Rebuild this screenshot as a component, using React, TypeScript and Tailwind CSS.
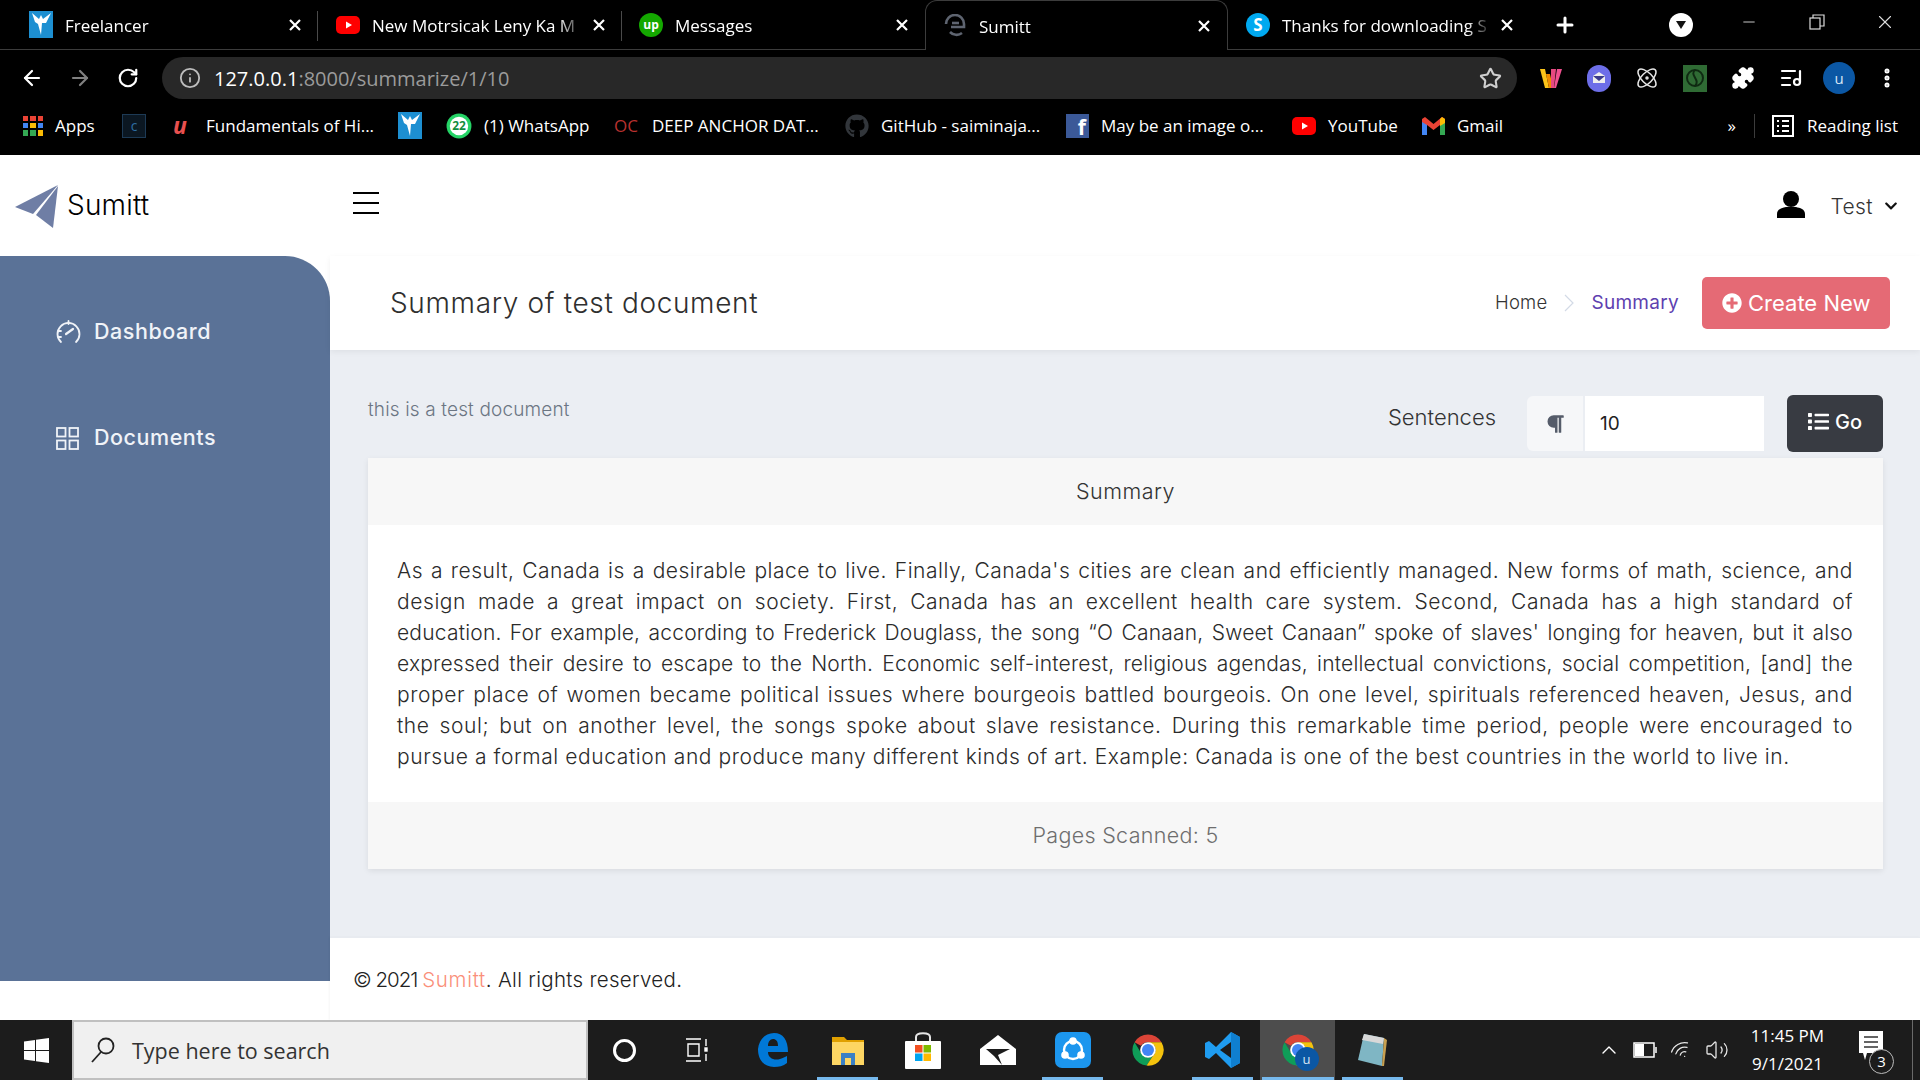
import React from "react";
import { FaParagraph, FaPlusCircle, FaList, FaChevronDown, FaGithub } from "react-icons/fa";
import { ArrowLeft, ArrowRight, RotateCw, Info, Star, Plus, X, Minus, Puzzle, ListMusic, MoreVertical, ChevronUp, Atom, Volume2, Wifi } from "lucide-react";

const FreelancerIcon = () => (
  <svg width="24" height="27" viewBox="0 0 24 27"><rect width="24" height="27" fill="#1d8fd1" /><path d="M3 2 L10 8 L12 4 L14 8 L22 2 L17 12 L13 12 L12 24 L9 13 L6 11Z" fill="#fff" /></svg>
);
const YtIcon = () => (
  <svg width="24" height="18" viewBox="0 0 24 18"><rect width="24" height="18" rx="5" fill="#f00" /><path d="M10 5.5 L16 9 L10 12.5Z" fill="#fff" /></svg>
);
const UpIcon = () => (
  <div className="w-6 h-6 rounded-full bg-[#14a800] flex items-center justify-center text-white text-[12px] font-bold leading-none">up</div>
);
const SumittFav = () => (
  <svg width="24" height="24" viewBox="0 0 24 24" fill="none" stroke="#5e6470" strokeWidth="2.6"><path d="M3 10 A9 9 0 0 1 21 10 L 21 13 L 8 13" /><path d="M7 18 A9 9 0 0 0 19 19" /><path d="M9 9 H16" /></svg>
);
const SkypeIcon = () => (
  <div className="w-6 h-6 rounded-full bg-[#00a9f0] flex items-center justify-center text-white text-[17px] font-bold leading-none">S</div>
);
const Close = () => <svg width="14" height="14" viewBox="0 0 14 14" stroke="#fff" strokeWidth="2.2"><path d="M2 2 L12 12 M12 2 L2 12" /></svg>;

function Tab({ w, pl, icon, title, active, sep }: { w: number; pl: number; icon: React.ReactNode; title: string; active?: boolean; sep?: boolean }) {
  return (
    <div style={{ width: w, paddingLeft: pl }} className={`relative h-[50px] flex items-center pr-[16px] ${active ? "border border-b-0 border-[#3c3c3c] rounded-t-[12px] bg-black" : "border-b border-[#3c3c3c]"}`}>
      <div className="w-6 shrink-0 flex justify-center">{icon}</div>
      <div className="flex-1 ml-3 mr-[8px] mt-[2px] overflow-hidden whitespace-nowrap text-[17px] text-white [mask-image:linear-gradient(to_right,#000_88%,transparent)]">{title}</div>
      <Close />
      {sep && <div className="absolute right-0 top-[11px] h-[30px] w-px bg-[#4a4a4a]" />}
    </div>
  );
}

function TabStrip() {
  return (
    <div className="flex h-[50px] bg-black">
      <Tab w={318} pl={29} icon={<FreelancerIcon />} title="Freelancer" sep />
      <Tab w={304} pl={18} icon={<YtIcon />} title="New Motrsicak Leny Ka M" sep />
      <Tab w={303} pl={17} icon={<UpIcon />} title="Messages" />
      <Tab w={303} pl={17} icon={<SumittFav />} title="Sumitt" active />
      <Tab w={302} pl={18} icon={<SkypeIcon />} title="Thanks for downloading S" />
      <div className="flex-1 flex h-[50px] border-b border-[#3c3c3c]">
        <div className="w-[70px] flex items-center justify-center"><Plus size={24} color="#fff" strokeWidth={3} /></div>
        <div className="ml-auto flex pr-px">
          <div className="w-[68px] flex items-center justify-center">
            <div className="w-[24px] h-[24px] rounded-full bg-white flex items-center justify-center">
              <svg width="12" height="10" viewBox="0 0 12 10"><path d="M1 1 H11 L6 9Z" fill="#111" /></svg>
            </div>
          </div>
          <div className="w-[68px] flex items-center justify-center pb-[6px]"><Minus size={18} color="#ddd" strokeWidth={1.2} /></div>
          <div className="w-[68px] flex items-center justify-center pb-[6px]">
            <svg width="16" height="16" viewBox="0 0 16 16" fill="none" stroke="#ddd" strokeWidth="1.2"><rect x="1" y="4" width="10" height="11" /><path d="M4 4 V1 H15 V12 H11" /></svg>
          </div>
          <div className="w-[68px] flex items-center justify-center pb-[6px]"><X size={22} color="#ddd" strokeWidth={1.2} /></div>
        </div>
      </div>
    </div>
  );
}

function ToolBtn({ children }: { children: React.ReactNode }) {
  return <div className="w-[48px] flex items-center justify-center shrink-0">{children}</div>;
}

function Toolbar() {
  return (
    <div className="flex h-[56px] bg-black items-center pl-[8px] pr-[9px]">
      <ToolBtn><ArrowLeft size={24} color="#fff" strokeWidth={2.2} /></ToolBtn>
      <ToolBtn><ArrowRight size={24} color="#808080" strokeWidth={2.2} /></ToolBtn>
      <ToolBtn><RotateCw size={22} color="#fff" strokeWidth={2.4} /></ToolBtn>
      <div className="ml-[10px] mr-[10px] flex-1 h-[42px] rounded-full bg-[#282828] flex items-center pl-[17px] pr-[15px]">
        <Info size={22} color="#bdbdbd" strokeWidth={2} />
        <div className="ml-[13px] mt-[2px] text-[20px] text-[#9b9b9b] whitespace-nowrap"><span className="text-white">127.0.0.1</span>:8000/summarize/1/10</div>
        <div className="ml-auto"><Star size={23} color="#cfcfcf" strokeWidth={2.2} /></div>
      </div>
      <ToolBtn>
        <svg width="24" height="24" viewBox="0 0 24 24"><path d="M1 3 H6 L10 22 H6Z" fill="#fcc419" /><path d="M7 8 L11 8 L14 22 H10Z" fill="#f08c00" /><path d="M12 3 L17 3 L15 22 H12Z" fill="#e64980" /><path d="M18 3 H23 L17 22 H15Z" fill="#f0508f" /></svg>
      </ToolBtn>
      <ToolBtn>
        <div className="w-6 h-[27px] rounded-full bg-[#6d6ee8] flex items-center justify-center">
          <svg width="14" height="14" viewBox="0 0 14 14"><path d="M1 5 L7 1 L13 5 V12 H1Z" fill="#eee" /><path d="M1 5 L7 10 L13 5Z" fill="#3a3a8c" /></svg>
        </div>
      </ToolBtn>
      <ToolBtn><Atom size={24} color="#e6e6e6" strokeWidth={1.5} /></ToolBtn>
      <ToolBtn>
        <div className="w-6 h-[27px] bg-[#2f6b34] flex items-center justify-center">
          <svg width="20" height="22" viewBox="0 0 20 22" fill="none" stroke="#0f2a12" strokeWidth="2"><circle cx="10" cy="11" r="8" /><path d="M10 3 C4 8 16 13 10 19" /></svg>
        </div>
      </ToolBtn>
      <ToolBtn><Puzzle size={24} fill="#fff" color="#fff" strokeWidth={1.5} /></ToolBtn>
      <ToolBtn><ListMusic size={24} color="#fff" strokeWidth={2.2} /></ToolBtn>
      <ToolBtn><div className="w-8 h-8 rounded-full bg-[#0b57a4] flex items-center justify-center text-[#d8e6f5] text-[15px] leading-none">u</div></ToolBtn>
      <ToolBtn><MoreVertical size={24} color="#fff" strokeWidth={3} /></ToolBtn>
    </div>
  );
}

function Bookmark({ w, icon, label }: { w: number; icon: React.ReactNode; label?: string }) {
  return (
    <div style={{ width: w }} className="flex items-center shrink-0">
      {icon}
      {label && <span className="ml-[12px] text-[17px] text-white whitespace-nowrap">{label}</span>}
    </div>
  );
}

const AppsIcon = () => (
  <div className="grid grid-cols-3 gap-[2px] w-[20px] h-[20px]">
    {["#ea4335", "#ea4335", "#ea4335", "#4285f4", "#fbbc05", "#4285f4", "#34a853", "#34a853", "#fbbc05"].map((c, i) => (
      <div key={i} style={{ background: c }} />
    ))}
  </div>
);

const GmailIcon = () => (
  <svg width="23" height="18" viewBox="0 0 23 18"><path d="M0 3 V18 H5 V7Z" fill="#4285f4" /><path d="M23 3 V18 H18 V7Z" fill="#34a853" /><path d="M0 2 L3 0 L11.5 7 L20 0 L23 2 V5 L18 8 L11.5 13 L5 8 L0 5Z" fill="#ea4335" /><path d="M18 2 L20 0 L23 2 V6 L18 9Z" fill="#fbbc05" /></svg>
);

function Bookmarks() {
  return (
    <div className="flex h-[49px] pb-[10px] bg-black items-center pl-[23px]">
      <Bookmark w={99} icon={<AppsIcon />} label="Apps" />
      <Bookmark w={51} icon={<div className="w-[24px] h-[24px] border border-[#1d3a55] bg-[#0b1722] text-[#2e6ea3] text-[14px] flex items-center justify-center leading-none">c</div>} />
      <Bookmark w={225} icon={<div className="w-[21px] text-[#e8504f] text-[23px] italic font-bold leading-none">u</div>} label="Fundamentals of Hi..." />
      <Bookmark w={48} icon={<FreelancerIcon />} />
      <Bookmark w={168} icon={
        <svg width="26" height="26" viewBox="0 0 24 24"><circle cx="12" cy="12" r="11.5" fill="#25d366" /><circle cx="12" cy="12" r="8.5" fill="#fff" /><text x="12" y="16" fontSize="11" fontWeight="700" textAnchor="middle" fill="#128c3e">22</text></svg>
      } label="(1) WhatsApp" />
      <Bookmark w={231} icon={<div className="w-[26px] text-[#b8312f] text-[17px] leading-none">OC</div>} label="DEEP ANCHOR DAT..." />
      <Bookmark w={221} icon={<FaGithub size={24} color="#32363b" />} label="GitHub - saiminaja..." />
      <Bookmark w={226} icon={<div className="w-[23px] h-[24px] bg-[#3b5998] text-white text-[21px] font-bold flex items-end justify-end pr-[3px] leading-none">f</div>} label="May be an image o..." />
      <Bookmark w={130} icon={<YtIcon />} label="YouTube" />
      <Bookmark w={100} icon={<GmailIcon />} label="Gmail" />
      <div className="ml-auto flex items-center pr-[22px]">
        <span className="text-white text-[17px] leading-none mr-[18px]">»</span>
        <div className="w-px h-[24px] bg-[#3c3c3c] mr-[17px]" />
        <svg width="22" height="22" viewBox="0 0 22 22" fill="none" stroke="#fff" strokeWidth="2"><rect x="1" y="1" width="20" height="20" /><path d="M5 6 H7 M10 6 H17 M5 11 H7 M10 11 H17 M5 16 H7 M10 16 H17" /></svg>
        <span className="ml-[13px] text-[17px] text-white whitespace-nowrap">Reading list</span>
      </div>
    </div>
  );
}

const Logo = () => (
  <svg width="44" height="44" viewBox="0 0 44 44">
    <path d="M0 23 L43 1 L18 30Z" fill="#6f7ea5" />
    <path d="M21 31 L43 2 L38 44Z" fill="#6f7ea5" />
  </svg>
);

function Navbar() {
  return (
    <div className="h-[101px] bg-white flex items-center pl-[15px] pr-[22px] shrink-0">
      <Logo />
      <span className="ml-[8px] text-[28px] font-light text-black leading-none tracking-[0.2px] mt-[-2px]">Sumitt</span>
      <div className="ml-[204px] mb-[5px] w-[26px] flex flex-col gap-[8px]">
        <div className="h-[2px] bg-black" />
        <div className="h-[2px] bg-black" />
        <div className="h-[2px] bg-black" />
      </div>
      <div className="ml-auto flex items-center">
        <svg className="mb-[2px]" width="28" height="27" viewBox="0 0 28 27"><circle cx="14" cy="8" r="8" /><path d="M0 27 V23 C0 18 5 17 9 16 H19 C23 17 28 18 28 23 V27Z" /></svg>
        <span className="ml-[25px] mt-[2px] text-[21px] font-light text-[#333] leading-none tracking-[0.4px]">Test</span>
        <FaChevronDown size={14} color="#111" className="ml-[11px]" />
      </div>
    </div>
  );
}

function Sidebar() {
  return (
    <div className="w-[330px] shrink-0 bg-white">
      <div className="h-[725px] bg-[#5a7297] rounded-tr-[45px] pl-[56px] pt-[64px] text-[#f0f3f8]">
        <div className="flex items-center h-[24px]">
          <svg width="25" height="24" viewBox="0 0 25 24" fill="none" stroke="#f0f3f8" strokeWidth="1.8" strokeLinecap="round">
            <path d="M5 22 A11 11 0 1 1 20 22" />
            <path d="M10 14 L17 9" strokeWidth="2.2" />
            <path d="M5 11 H2.5 M5 17 H2.5 M12.5 1 V4" />
          </svg>
          <span className="ml-[13px] text-[21.5px] font-medium leading-none tracking-[0.55px]">Dashboard</span>
        </div>
        <div className="flex items-center h-[24px] mt-[82px]">
          <svg width="23" height="23" viewBox="0 0 23 23" fill="none" stroke="#f0f3f8" strokeWidth="1.8"><rect x="1" y="1" width="8.5" height="8.5" /><rect x="13.5" y="1" width="8.5" height="8.5" /><rect x="1" y="13.5" width="8.5" height="8.5" /><rect x="13.5" y="13.5" width="8.5" height="8.5" /></svg>
          <span className="ml-[15px] text-[21.5px] font-medium leading-none tracking-[0.55px]">Documents</span>
        </div>
      </div>
    </div>
  );
}

const LINES = [
  { t: "As a result, Canada is a desirable place to live. Finally, Canada's cities are clean and efficiently managed. New forms of math, science, and", c: "tracking-[0.5px]" },
  { t: "design made a great impact on society. First, Canada has an excellent health care system. Second, Canada has a high standard of", c: "tracking-[0.58px]" },
  { t: "education. For example, according to Frederick Douglass, the song “O Canaan, Sweet Canaan” spoke of slaves' longing for heaven, but it also", c: "tracking-[0.2px]" },
  { t: "expressed their desire to escape to the North. Economic self-interest, religious agendas, intellectual convictions, social competition, [and] the", c: "tracking-[0.2px]" },
  { t: "proper place of women became political issues where bourgeois battled bourgeois. On one level, spirituals referenced heaven, Jesus, and", c: "tracking-[0.58px]" },
  { t: "the soul; but on another level, the songs spoke about slave resistance. During this remarkable time period, people were encouraged to", c: "tracking-[0.58px]" },
];

function Content() {
  return (
    <div className="flex-1 flex flex-col min-w-0">
      <div className="h-[94px] bg-white shadow-[0_2px_6px_rgba(0,0,0,0.06)] flex items-center pl-[60px] pr-[30px] shrink-0 relative">
        <h1 className="text-[28px] font-light text-[#2f2f2f] leading-none tracking-[0.65px]">Summary of test document</h1>
        <div className="ml-auto flex items-center">
          <span className="text-[18.5px] font-light text-[#333] tracking-[0.2px]">Home</span>
          <svg className="mx-[17px]" width="10" height="18" viewBox="0 0 10 18" fill="none" stroke="#d3dae6" strokeWidth="1.2"><path d="M1 1 L9 9 L1 17" /></svg>
          <span className="text-[19px] text-[#5e3fb0] tracking-[0.3px]">Summary</span>
          <button className="ml-[23px] w-[188px] h-[52px] rounded-[5px] bg-[#e56a75] text-white flex items-center pl-[20px]">
            <FaPlusCircle size={20} color="#fff" />
            <span className="ml-[6px] text-[22px] whitespace-nowrap">Create New</span>
          </button>
        </div>
      </div>
      <div className="flex-1 bg-[#ebeef3] pt-[45px] pl-[38px] pr-[37px]">
        <div className="flex items-start h-[57px]">
          <p className="text-[19px] font-light text-[#6c7683] leading-none mt-[5px] tracking-[0.15px]">this is a test document</p>
          <span className="ml-auto mr-[31px] text-[22px] font-light text-[#333] leading-[44px]">Sentences</span>
          <div className="flex w-[237px] h-[55px] mt-px mr-[23px]">
            <div className="w-[56px] bg-[#f6f7f9] rounded-l-[6px] flex items-center justify-center"><FaParagraph size={20} color="#555c6a" /></div>
            <div className="flex-1 ml-[2px] bg-white flex items-center pl-[15px] pt-[2px] text-[19px] text-[#222]">10</div>
          </div>
          <button className="w-[96px] h-[57px] rounded-[6px] bg-[#383b42] text-white flex items-center justify-center pb-[4px]">
            <FaList size={21} color="#fff" />
            <span className="ml-[6px] text-[20px] font-medium">Go</span>
          </button>
        </div>
        <div className="mt-[6px] bg-white shadow-[0_2px_6px_rgba(0,0,0,0.08)]">
          <div className="h-[67px] bg-[#f7f7f7] flex items-center justify-center text-[21.5px] tracking-[0.5px] font-light text-[#333]">Summary</div>
          <div className="h-[277px] pt-[30px] pl-[29px] pr-[30px] text-[21px] font-light text-[#2b2b2b] leading-[31px]">
            {LINES.map((l) => (
              <div key={l.t} className={`text-justify [text-align-last:justify] ${l.c}`}>{l.t}</div>
            ))}
            <div className="tracking-[0.59px]">pursue a formal education and produce many different kinds of art. Example: Canada is one of the best countries in the world to live in.</div>
          </div>
          <div className="h-[67px] bg-[#f7f7f7] flex items-center justify-center text-[21.5px] tracking-[0.3px] font-light text-[#6e6e6e]">Pages Scanned: 5</div>
        </div>
      </div>
      <div className="h-[83px] pt-[2px] bg-white border-t border-[#e8ebf0] flex items-center pl-[23px] text-[20.5px] font-light text-[#222] shrink-0 shadow-[-1px_0_2px_rgba(0,0,0,0.04)]">
        <span className="whitespace-pre"><span className="tracking-[-1px]">© 2021 </span><span className="text-[#fa8f7a] tracking-[0.7px]">Sumitt</span><span className="tracking-[0.3px]">. All rights reserved.</span></span>
      </div>
    </div>
  );
}

const ChromeIcon = ({ size = 34 }: { size?: number }) => (
  <svg width={size} height={size} viewBox="0 0 48 48">
    <path d="M5 13 A22 22 0 0 1 43 13 H24 A11 11 0 0 0 14 18Z" fill="#db4437" />
    <path d="M5 13 A22 22 0 0 0 22 46 L31 32 A11 11 0 0 1 14 28Z" fill="#0f9d58" />
    <path d="M43 13 A22 22 0 0 1 22 46 L31 32 A11 11 0 0 0 33 18 L24 13Z" fill="#f4c20d" />
    <circle cx="24" cy="24" r="11" fill="#fff" />
    <circle cx="24" cy="24" r="8.5" fill="#4285f4" />
  </svg>
);

function TaskBtn({ w = 75, line, active, children }: { w?: number; line?: number; active?: boolean; children: React.ReactNode }) {
  return (
    <div style={{ width: w }} className={`relative h-[60px] flex items-center justify-center shrink-0 ${active ? "bg-[#4d4d4d]" : ""}`}>
      {children}
      {line && <div style={{ width: line }} className="absolute bottom-0 h-[3px] bg-[#76b9ed]" />}
    </div>
  );
}

function Taskbar() {
  return (
    <div className="h-[60px] bg-[#1c1c1c] flex shrink-0 font-['Open_Sans',sans-serif]">
      <div className="w-[72px] flex items-center justify-center">
        <svg width="25" height="25" viewBox="0 0 25 25" fill="#fff"><path d="M0 3.5 L11 2 V12 H0Z" /><path d="M12 1.8 L25 0 V12 H12Z" /><path d="M0 13 H11 V23 L0 21.5Z" /><path d="M12 13 H25 V25 L12 23.2Z" /></svg>
      </div>
      <div className="w-[516px] h-full bg-[#f0f0f0] border-2 border-[#c0c0c0] flex items-center pl-[17px]">
        <svg width="24" height="26" viewBox="0 0 24 26" fill="none" stroke="#222" strokeWidth="1.8"><circle cx="15" cy="9" r="7.5" /><path d="M10 15 L1 25" /></svg>
        <span className="ml-[17px] mt-[3px] text-[21.5px] text-[#333] whitespace-nowrap">Type here to search</span>
      </div>
      <TaskBtn w={72}><div className="w-[23px] h-[23px] rounded-full border-[3px] border-white" /></TaskBtn>
      <TaskBtn w={75}>
        <svg width="24" height="24" viewBox="0 0 24 24" fill="none" stroke="#fff" strokeWidth="1.4"><path d="M0 1 H15 M0 23 H15 M2 6 H13 V18 H2Z" /><path d="M20 1 V8 M20 16 V23" /><rect x="19" y="10" width="2" height="3" fill="#fff" /></svg>
      </TaskBtn>
      <TaskBtn>
        <svg width="32" height="34" viewBox="0 0 32 34"><path d="M1 16 C2 6 9 0 17 0 C26 0 31 7 31 19 H11 C11 25 17 28 23 26 C26 25 28 24 30 23 V30 C26 33 22 34 17 34 C7 34 1 27 1 16Z M11 13 H21 C21 8 19 6 16 6 C13 6 11 9 11 13Z" fill="#0078d7" fillRule="evenodd" /></svg>
      </TaskBtn>
      <TaskBtn line={61}>
        <svg width="32" height="30" viewBox="0 0 32 30"><path d="M0 2 H12 L15 5 H32 V12 H0Z" fill="#e0a000" /><path d="M0 7 H32 V30 H0Z" fill="#fdd663" /><path d="M9 30 V18 H23 V30 H19 V23 H13 V30Z" fill="#3b80c4" /></svg>
      </TaskBtn>
      <TaskBtn>
        <svg width="36" height="38" viewBox="0 0 36 38"><path d="M11 11 V6 C11 1 25 1 25 6 V11" fill="none" stroke="#e6e6e6" strokeWidth="2" /><rect y="10" width="36" height="28" rx="1" fill="#fff" /><rect x="10" y="14" width="7.5" height="7.5" fill="#f25022" /><rect x="18.5" y="14" width="7.5" height="7.5" fill="#7fba00" /><rect x="10" y="22.5" width="7.5" height="7.5" fill="#00a4ef" /><rect x="18.5" y="22.5" width="7.5" height="7.5" fill="#ffb900" /></svg>
      </TaskBtn>
      <TaskBtn>
        <svg width="36" height="30" viewBox="0 0 36 30"><path d="M18 0 L36 14 V30 H0 V14Z" fill="#fff" /><path d="M6 14 H30 L18 20 L22 30 L14 21Z" fill="#1c1c1c" /></svg>
      </TaskBtn>
      <TaskBtn line={61}>
        <div className="w-[36px] h-[36px] rounded-[7px] bg-[#1c96ee] flex items-center justify-center">
          <svg width="26" height="26" viewBox="0 0 26 26" fill="none" stroke="#fff" strokeWidth="2.4"><circle cx="13" cy="13" r="9" /><circle cx="13" cy="4" r="2.6" fill="#fff" /><circle cx="5" cy="18" r="2.6" fill="#fff" /><circle cx="21" cy="18" r="2.6" fill="#fff" /></svg>
        </div>
      </TaskBtn>
      <TaskBtn><ChromeIcon /></TaskBtn>
      <TaskBtn line={61}>
        <svg width="36" height="36" viewBox="0 0 36 36"><path d="M26 0 L35 5 V31 L26 36 L11 21 L4 27 L0 25 V11 L4 9 L11 15Z M26 10 L15 18 L26 26Z" fill="#1f9cf0" fillRule="evenodd" /><path d="M26 0 L35 5 V31 L26 36Z" fill="#0f7fd0" /></svg>
      </TaskBtn>
      <TaskBtn w={75} active line={72}>
        <div className="relative">
          <ChromeIcon />
          <div className="absolute -right-[4px] -bottom-[4px] w-[24px] h-[24px] rounded-full bg-[#0b57a4] text-[#d8e6f5] text-[13px] flex items-center justify-center leading-none">u</div>
        </div>
      </TaskBtn>
      <TaskBtn line={61}>
        <svg width="34" height="36" viewBox="0 0 34 36"><path d="M8 2 L28 6 L26 34 L2 28Z" fill="#7fb6c4" /><path d="M8 2 L28 6 L27 12 L6 8Z" fill="#d8d8d8" /><path d="M28 6 L31 8 L28 34 L26 34Z" fill="#c8a050" /></svg>
      </TaskBtn>
      <div className="ml-auto flex items-center text-white">
        <div className="w-[37px] flex justify-center"><ChevronUp size={24} color="#fff" strokeWidth={1.4} /></div>
        <div className="w-[36px] flex justify-center">
          <svg width="24" height="16" viewBox="0 0 24 16" fill="none" stroke="#fff" strokeWidth="1.5"><rect x="1" y="1" width="20" height="14" /><rect x="2" y="2" width="9" height="12" fill="#fff" stroke="none" /><path d="M23 5 V11" /></svg>
        </div>
        <div className="w-[36px] flex justify-center"><Wifi size={22} color="#e6e6e6" strokeWidth={1.4} className="-rotate-[30deg]" /></div>
        <div className="w-[36px] flex justify-center"><Volume2 size={24} color="#e6e6e6" strokeWidth={1.3} /></div>
        <div className="w-[105px] text-center text-[17px] leading-[28px] whitespace-nowrap">
          <div>11:45 PM</div>
          <div>9/1/2021</div>
        </div>
        <div className="relative w-[72px] h-full flex items-center">
          <svg className="ml-[19px] mb-[8px]" width="24" height="30" viewBox="0 0 24 30"><path d="M0 0 H24 V22 H8 L6 29 L4 22 H0Z" fill="#fff" /><path d="M5 6 H19 M5 11 H19 M5 16 H19" stroke="#333" strokeWidth="1.5" /></svg>
          <div className="absolute left-[29px] top-[29px] w-[25px] h-[25px] rounded-full border border-[#bbb] bg-[#1c1c1c] text-white text-[15px] flex items-center justify-center leading-none">3</div>
        </div>
        <div className="w-[8px] h-full border-l border-[#6a6a6a]" />
      </div>
    </div>
  );
}

export default function App() {
  return (
    <div className="h-screen w-[1920px] overflow-hidden flex flex-col bg-white font-['Inter',sans-serif]">
      <div className="shrink-0 font-['Open_Sans',sans-serif]">
        <TabStrip />
        <Toolbar />
        <Bookmarks />
      </div>
      <Navbar />
      <div className="flex-1 flex min-h-0">
        <Sidebar />
        <Content />
      </div>
      <Taskbar />
    </div>
  );
}
